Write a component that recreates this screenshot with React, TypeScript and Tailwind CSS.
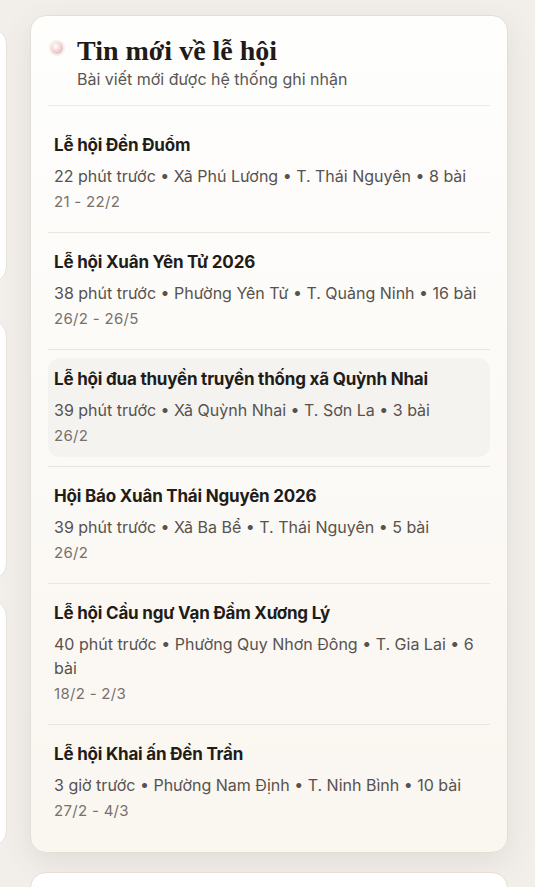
import React from 'react';

interface FestivalItem {
    title: string;
    ago: string;
    place: string;
    province: string;
    posts: number;
    dates: string;
    active?: boolean;
}

const items: FestivalItem[] = [
    { title: 'Lễ hội Đền Đuổm', ago: '22 phút trước', place: 'Xã Phú Lương', province: 'T. Thái Nguyên', posts: 8, dates: '21 - 22/2' },
    { title: 'Lễ hội Xuân Yên Tử 2026', ago: '38 phút trước', place: 'Phường Yên Tử', province: 'T. Quảng Ninh', posts: 16, dates: '26/2 - 26/5' },
    { title: 'Lễ hội đua thuyền truyền thống xã Quỳnh Nhai', ago: '39 phút trước', place: 'Xã Quỳnh Nhai', province: 'T. Sơn La', posts: 3, dates: '26/2', active: true },
    { title: 'Hội Báo Xuân Thái Nguyên 2026', ago: '39 phút trước', place: 'Xã Ba Bể', province: 'T. Thái Nguyên', posts: 5, dates: '26/2' },
    { title: 'Lễ hội Cầu ngư Vạn Đầm Xương Lý', ago: '40 phút trước', place: 'Phường Quy Nhơn Đông', province: 'T. Gia Lai', posts: 6, dates: '18/2 - 2/3' },
    { title: 'Lễ hội Khai ấn Đền Trần', ago: '3 giờ trước', place: 'Phường Nam Định', province: 'T. Ninh Bình', posts: 10, dates: '27/2 - 4/3' },
];

const sans = { fontFamily: 'Inter, "Noto Sans", sans-serif' };

export default function App() {
    return (
        <div className="w-[535px] h-[887px] overflow-hidden bg-[#f2efeb] flex gap-[23px]" style={sans}>
            {/* left column, mostly off screen */}
            <div className="w-[307px] -ml-[300px] shrink-0 flex flex-col pt-[28px]">
                <div className="h-[255px] bg-white rounded-[16px] border border-[#e7e1da]" />
                <div className="h-[260px] mt-[37px] bg-white rounded-[16px] border border-[#e7e1da]" />
                <div className="h-[247px] mt-[20px] bg-white rounded-[16px] border border-[#e7e1da]" />
            </div>

            <div className="w-[478px] shrink-0 flex flex-col gap-[19px] pt-[15px]">
                <section className="rounded-[16px] border border-[#e6ded5] bg-gradient-to-b from-[#fefefd] to-[#faf6f0] shadow-[0_10px_30px_rgba(80,60,40,0.10)] px-[17px] pt-[19px] pb-[11px]">
                    <div className="flex items-start gap-[14px] pl-[3px] pb-[15px] border-b border-[#efe9e3]">
                        <span className="mt-[7px] w-[12px] h-[12px] rounded-full shrink-0 bg-[radial-gradient(circle_at_38%_35%,#ffffff_0%,#f4dede_35%,#d8aaaa_100%)] shadow-[0_0_0_2px_rgba(240,225,225,0.6)]" />
                        <div className="flex flex-col">
                            <h2
                                className="text-[28px] leading-[32px] font-bold not-italic text-[#221a16]"
                                style={{ fontFamily: '"Liberation Serif", "DejaVu Serif", serif' }}
                            >
                                Tin mới về lễ hội
                            </h2>
                            <p className="text-[16px] leading-[22px] text-[#5b5652] mt-[1px]">Bài viết mới được hệ thống ghi nhận</p>
                        </div>
                    </div>

                    <ul className="flex flex-col pt-[10px]">
                        {items.map((it, idx) => (
                            <li
                                key={it.title}
                                className={`pt-[8px] pb-[9px] ${idx < items.length - 1 ? 'border-b border-[#ebe5df]' : ''}`}
                            >
                                <div className={`rounded-[12px] px-[6px] pt-[10px] pb-[10px] ${it.active ? 'bg-[#f5f3f0]' : ''}`}>
                                    <h3 className="text-[17px] leading-[22px] font-bold text-[#221c18] tracking-[-0.2px]">{it.title}</h3>
                                    <p className="mt-[8px] text-[16px] leading-[24px] text-[#57524e]">
                                        {it.ago} • {it.place} • {it.province} • {it.posts} bài
                                    </p>
                                    <p className="mt-[3px] text-[15px] leading-[22px] tracking-[0.3px] text-[#77716c]">{it.dates}</p>
                                </div>
                            </li>
                        ))}
                    </ul>
                </section>

                <section className="h-[120px] rounded-[16px] border border-[#e6ded5] bg-white shrink-0" />
            </div>
        </div>
    );
}
